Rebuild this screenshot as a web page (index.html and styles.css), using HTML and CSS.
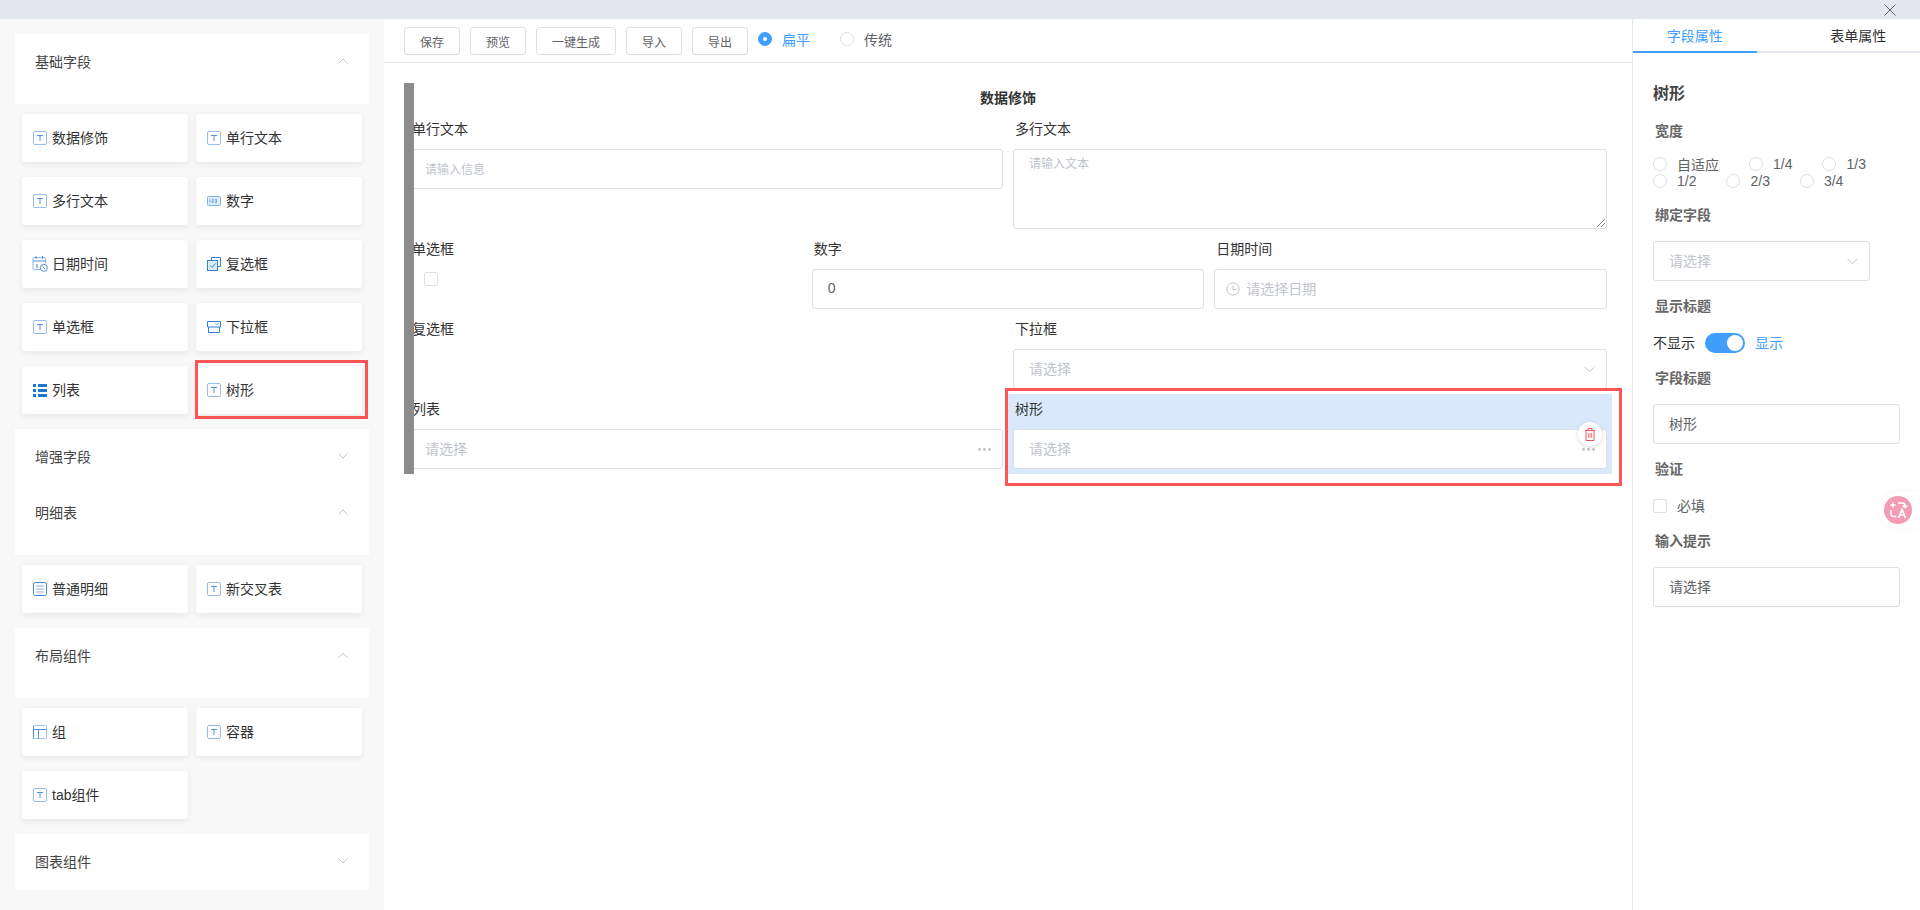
FILE: index.html
```html
<!DOCTYPE html>
<html lang="zh-CN">
<head>
    <meta charset="UTF-8">
    <title>表单设计器</title>
    <link rel="stylesheet" href="styles.css">
</head>
<body>
    <svg class="icon-defs" width="0" height="0">
        <symbol id="i-text" viewBox="0 0 14 14">
            <rect x="0.5" y="0.5" width="13" height="13" rx="1.5" fill="#fff" stroke="#92bdee"/>
            <path d="M4 4.5h6M7 4.5v5.5" fill="none" stroke="#4f94e0"/>
        </symbol>
        <symbol id="i-number" viewBox="0 0 14 10">
            <rect x="0.5" y="0.5" width="13" height="9" rx="1" fill="#dcebfa" stroke="#7fb0e6"/>
            <path d="M3 3.5v3M5 3.5h1.500v1.500h-1.500v1.500h1.500M8 3.500h1.500v3h-1.500M8 5h1.500" fill="none" stroke="#4f94e0" stroke-width="0.7"/>
        </symbol>
        <symbol id="i-date" viewBox="0 0 16 16">
            <path d="M9 13.500h-7a1 1 0 0 1-1-1v-10a1 1 0 0 1 1-1h10.500a1 1 0 0 1 1 1v5" fill="none" stroke="#8fb2e6"/>
            <path d="M1 5h12.500M4 0v3M10.500 0v3" fill="none" stroke="#4f94e0"/>
            <path d="M5 8v4" fill="none" stroke="#4a6fb0"/>
            <circle cx="11.800" cy="11.800" r="3.500" fill="#fff" stroke="#4f94e0"/>
            <path d="M10.500 10.500l2.500 2.500" fill="none" stroke="#4f94e0"/>
        </symbol>
        <symbol id="i-check" viewBox="0 0 14 14">
            <path d="M4.500 3.500v-3h9v9h-3" fill="none" stroke="#2f7fd6"/>
            <rect x="0.500" y="3.500" width="10" height="10" fill="#dcebfa" stroke="#2f7fd6"/>
            <path d="M3 8.500l2 2 3.500-4" fill="none" stroke="#2f7fd6"/>
        </symbol>
        <symbol id="i-select" viewBox="0 0 14 12">
            <path d="M0.500 0.500h13M0.500 0.500v5.500h13v-5.500M1.500 6v5.500h11v-5.500" fill="none" stroke="#2f7fd6"/>
            <path d="M8.500 2.200l1.500 1.500 1.500-1.500" fill="none" stroke="#4f94e0"/>
        </symbol>
        <symbol id="i-list" viewBox="0 0 14 13">
            <path d="M0 0h3v3h-3zM0 5h3v3h-3zM0 10h3v3h-3zM5 0h9v3h-9zM5 5h9v3h-9zM5 10h9v3h-9z" fill="#1976d2"/>
        </symbol>
        <symbol id="i-detail" viewBox="0 0 14 14">
            <rect x="0.500" y="0.500" width="13" height="13" rx="2" fill="#fff" stroke="#3b87db"/>
            <path d="M3 4h8M3 7h8M3 10h8" fill="none" stroke="#8fb2e6" stroke-width="1.200"/>
        </symbol>
        <symbol id="i-group" viewBox="0 0 14 14">
            <rect x="0.500" y="0.500" width="13" height="13" rx="1" fill="#fff" stroke="#9cc4ee"/>
            <path d="M0 4.500h14M5.500 4.500v9" fill="none" stroke="#4f94e0"/>
            <path d="M0.500 0.500v13" fill="none" stroke="#4f94e0"/>
        </symbol>
        <symbol id="i-up" viewBox="0 0 10 6">
            <path d="M0.500 5.500l4.500-4.500 4.500 4.500" fill="none" stroke="#c0c4cc"/>
        </symbol>
        <symbol id="i-down" viewBox="0 0 10 6">
            <path d="M0.500 0.500l4.500 4.500 4.500-4.500" fill="none" stroke="#c0c4cc"/>
        </symbol>
        <symbol id="i-drop" viewBox="0 0 11 7">
            <path d="M0.500 0.800l5 5 5-5" fill="none" stroke="#c0c4cc"/>
        </symbol>
        <symbol id="i-dots" viewBox="0 0 13 3">
            <circle cx="1.500" cy="1.500" r="1.400" fill="#c0c4cc"/>
            <circle cx="6.500" cy="1.500" r="1.400" fill="#c0c4cc"/>
            <circle cx="11.500" cy="1.500" r="1.400" fill="#c0c4cc"/>
        </symbol>
    </svg>

    <div class="topbar">
        <svg class="close-icon" width="12" height="12" viewBox="0 0 12 12"><path d="M0.500 0.500l11 11M11.500 0.500l-11 11" fill="none" stroke="#606266"/></svg>
    </div>

    <div class="workspace">
        <aside class="sidebar">
            <div class="group-head open"><span>基础字段</span><svg class="chev"><use href="#i-up"/></svg></div>
            <div class="cards">
                <div class="card"><span class="card-icon"><svg width="14" height="14"><use href="#i-text"/></svg></span>数据修饰</div>
                <div class="card"><span class="card-icon"><svg width="14" height="14"><use href="#i-text"/></svg></span>单行文本</div>
                <div class="card"><span class="card-icon"><svg width="14" height="14"><use href="#i-text"/></svg></span>多行文本</div>
                <div class="card"><span class="card-icon"><svg width="14" height="10"><use href="#i-number"/></svg></span>数字</div>
                <div class="card"><span class="card-icon"><svg width="16" height="16"><use href="#i-date"/></svg></span>日期时间</div>
                <div class="card"><span class="card-icon"><svg width="14" height="14"><use href="#i-check"/></svg></span>复选框</div>
                <div class="card"><span class="card-icon"><svg width="14" height="14"><use href="#i-text"/></svg></span>单选框</div>
                <div class="card"><span class="card-icon"><svg width="14" height="12"><use href="#i-select"/></svg></span>下拉框</div>
                <div class="card"><span class="card-icon"><svg width="14" height="13"><use href="#i-list"/></svg></span>列表</div>
                <div class="card"><span class="card-icon"><svg width="14" height="14"><use href="#i-text"/></svg></span>树形<i class="mark mark-card"></i></div>
            </div>
            <div class="group-head"><span>增强字段</span><svg class="chev"><use href="#i-down"/></svg></div>
            <div class="group-head open"><span>明细表</span><svg class="chev"><use href="#i-up"/></svg></div>
            <div class="cards">
                <div class="card"><span class="card-icon"><svg width="14" height="14"><use href="#i-detail"/></svg></span>普通明细</div>
                <div class="card"><span class="card-icon"><svg width="14" height="14"><use href="#i-text"/></svg></span>新交叉表</div>
            </div>
            <div class="group-head open"><span>布局组件</span><svg class="chev"><use href="#i-up"/></svg></div>
            <div class="cards">
                <div class="card"><span class="card-icon"><svg width="14" height="14"><use href="#i-group"/></svg></span>组</div>
                <div class="card"><span class="card-icon"><svg width="14" height="14"><use href="#i-text"/></svg></span>容器</div>
                <div class="card"><span class="card-icon"><svg width="14" height="14"><use href="#i-text"/></svg></span>tab组件</div>
            </div>
            <div class="group-head"><span>图表组件</span><svg class="chev"><use href="#i-down"/></svg></div>
        </aside>

        <main class="main">
            <div class="toolbar">
                <button class="btn">保存</button>
                <button class="btn">预览</button>
                <button class="btn">一键生成</button>
                <button class="btn">导入</button>
                <button class="btn">导出</button>
                <label class="radio radio-on"><i class="dot"></i>扁平</label>
                <label class="radio"><i class="dot"></i>传统</label>
            </div>

            <div class="canvas">
                <div class="form">
                    <div class="form-bar"></div>
                    <div class="form-title">数据修饰</div>
                    <div class="row">
                        <div class="field">
                            <div class="field-label">单行文本</div>
                            <div class="input small">请输入信息</div>
                        </div>
                        <div class="field">
                            <div class="field-label">多行文本</div>
                            <div class="input textarea small">请输入文本
                                <svg class="grip" width="8" height="8" viewBox="0 0 8 8"><path d="M0 8l8-8M4 8l4-4" fill="none" stroke="#606266" stroke-width="0.800"/></svg>
                            </div>
                        </div>
                    </div>
                    <div class="row row-3">
                        <div class="field">
                            <div class="field-label">单选框</div>
                            <div class="check-holder"><i class="check"></i></div>
                        </div>
                        <div class="field">
                            <div class="field-label">数字</div>
                            <div class="input filled">0</div>
                        </div>
                        <div class="field">
                            <div class="field-label">日期时间</div>
                            <div class="input date">
                                <svg width="14" height="14" viewBox="0 0 14 14"><circle cx="7" cy="7" r="6.200" fill="none" stroke="#c0c4cc"/><path d="M7 3.500v4h3.500" fill="none" stroke="#c0c4cc"/></svg>
                                请选择日期
                            </div>
                        </div>
                    </div>
                    <div class="row">
                        <div class="field">
                            <div class="field-label">复选框</div>
                        </div>
                        <div class="field">
                            <div class="field-label">下拉框</div>
                            <div class="input between">请选择<svg width="11" height="7"><use href="#i-drop"/></svg></div>
                        </div>
                    </div>
                    <div class="row">
                        <div class="field">
                            <div class="field-label">列表</div>
                            <div class="input between">请选择<svg width="13" height="3"><use href="#i-dots"/></svg></div>
                        </div>
                        <div class="field selected">
                            <div class="field-label">树形</div>
                            <div class="input between">请选择<svg width="13" height="3"><use href="#i-dots"/></svg></div>
                            <div class="delete-btn">
                                <svg width="10" height="13" viewBox="0 0 10 13"><path d="M0 2.500h10M3 2.500v-2h4v2M1 2.500v10h8v-10M3.800 5v5M6.200 5v5" fill="none" stroke="#f4505c"/></svg>
                            </div>
                            <i class="mark mark-field"></i>
                        </div>
                    </div>
                </div>
            </div>
        </main>

        <aside class="props">
            <div class="tabs">
                <div class="tab active">字段属性</div>
                <div class="tab tab-second">表单属性</div>
            </div>
            <div class="props-body">
                <div class="props-title">树形</div>
                <div class="prop-label">宽度</div>
                <div class="radio-group">
                    <label class="radio"><i class="dot"></i>自适应</label>
                    <label class="radio"><i class="dot"></i>1/4</label>
                    <label class="radio"><i class="dot"></i>1/3</label>
                    <label class="radio"><i class="dot"></i>1/2</label>
                    <label class="radio"><i class="dot"></i>2/3</label>
                    <label class="radio"><i class="dot"></i>3/4</label>
                </div>
                <div class="prop-label">绑定字段</div>
                <div class="input between select-short">请选择<svg width="11" height="7"><use href="#i-drop"/></svg></div>
                <div class="prop-label">显示标题</div>
                <div class="switch-row">
                    <span class="nudge">不显示</span>
                    <span class="switch"><i></i></span>
                    <span class="nudge switch-on">显示</span>
                </div>
                <div class="prop-label">字段标题</div>
                <div class="input filled">树形</div>
                <div class="prop-label">验证</div>
                <div class="check-row"><i class="check"></i><span class="nudge">必填</span></div>
                <div class="prop-label">输入提示</div>
                <div class="input filled">请选择</div>
            </div>
            <div class="translate">
                <span class="translate-ball">
                    <svg width="20" height="20" viewBox="0 0 20 20">
                        <path d="M5 1.500l1 2.500 2.500 1-2.500 1-1 2.500-1-2.500-2.500-1 2.500-1z" fill="#fff"/>
                        <path d="M10 3h4.500a2.500 2.500 0 0 1 2.500 2.500v2M15 5.500l2 2 2-2" fill="none" stroke="#fff" stroke-width="1.600"/>
                        <path d="M3 10v4a2.500 2.500 0 0 0 2.500 2.500h3" fill="none" stroke="#fff" stroke-width="1.600"/>
                        <path d="M10.500 18l3.500-8.500 3.500 8.500M12 15h4" fill="none" stroke="#fff" stroke-width="1.700"/>
                    </svg>
                </span>
            </div>
        </aside>
    </div>
</body>
</html>
```

FILE: styles.css
```css
* {
    box-sizing: border-box;
}

body {
    margin: 0;
    height: 910px;
    overflow: hidden;
    background: #fff;
    color: #303133;
    font-family: "Liberation Sans", "Noto Sans CJK SC", sans-serif;
    font-size: 14px;
}

i {
    font-style: normal;
}

.icon-defs {
    position: absolute;
}

.nudge {
    padding-bottom: 2px;
}

.topbar {
    height: 19px;
    background: #e4e7ef;
    display: flex;
    justify-content: flex-end;
    align-items: center;
    padding-right: 24px;
}

.workspace {
    display: flex;
    height: 891px;
}

/* left field list */
.sidebar {
    width: 384px;
    flex: none;
    background: #f8f8f8;
    padding: 15px 15px 0;
}

.group-head {
    height: 56px;
    background: #fff;
    padding: 0 20px 2px;
    display: flex;
    justify-content: space-between;
    align-items: center;
    color: #444;
}

.group-head.open {
    height: 70px;
    padding-bottom: 16px;
}

.chev {
    width: 10px;
    height: 6px;
    margin-right: 1px;
}

.cards {
    display: grid;
    grid-template-columns: 166px 166px;
    gap: 15px 8px;
    margin: 10px 7px 15px;
}

.card {
    position: relative;
    height: 48px;
    background: #fff;
    border-radius: 3px;
    box-shadow: 0 2px 6px rgba(0, 0, 0, 0.08);
    display: flex;
    align-items: center;
    padding: 0 0 2px 10px;
    color: #333;
}

.card-icon {
    width: 16px;
    margin: 2px 4px 0 0;
    display: flex;
    justify-content: center;
    align-items: center;
}

.mark {
    position: absolute;
    border: 3px solid #fd5555;
    pointer-events: none;
    z-index: 3;
}

.mark-card {
    top: -6px;
    left: -1px;
    right: -6px;
    bottom: -5px;
}

.mark-field {
    top: -6px;
    left: -3px;
    right: -10px;
    bottom: -12px;
}

/* middle canvas */
.main {
    flex: 1;
    min-width: 0;
}

.toolbar {
    height: 44px;
    border-bottom: 1px solid #e4e7ed;
    padding: 8px 20px 0;
    display: flex;
    align-items: flex-start;
}

.btn {
    height: 28px;
    padding: 0 15px;
    margin-right: 10px;
    background: #fff;
    border: 1px solid #dcdfe6;
    border-radius: 3px;
    color: #606266;
    font-family: inherit;
    font-size: 12px;
}

.radio {
    display: inline-flex;
    align-items: center;
    color: #606266;
    margin-right: 30px;
}

.toolbar .radio {
    height: 24px;
}

.radio .dot {
    width: 14px;
    height: 14px;
    border: 1px solid #dcdfe6;
    border-radius: 50%;
    margin-right: 10px;
    background: #fff;
    flex: none;
}

.radio-on {
    color: #409eff;
}

.radio-on .dot {
    background: #409eff;
    border-color: #409eff;
    position: relative;
}

.radio-on .dot::after {
    content: "";
    position: absolute;
    left: 4px;
    top: 4px;
    width: 4px;
    height: 4px;
    background: #fff;
    border-radius: 50%;
}

.canvas {
    padding: 20px 20px 0;
}

.form {
    position: relative;
}

.form-bar {
    position: absolute;
    left: 0;
    top: 0;
    bottom: 0;
    width: 10px;
    background: #8c8c8c;
    z-index: 2;
}

.form-title {
    padding-top: 5px;
    height: 26px;
    line-height: 21px;
    text-align: center;
    font-weight: bold;
}

.row {
    display: grid;
    grid-template-columns: 1fr 1fr;
}

.row-3 {
    grid-template-columns: 1fr 1fr 1fr;
}

.field {
    position: relative;
    padding: 0 5px;
    min-height: 80px;
}

.field-label {
    height: 40px;
    line-height: 40px;
    padding-left: 2px;
    color: #333;
}

.field:first-child .field-label {
    padding-left: 3px;
}

.input {
    height: 40px;
    border: 1px solid #dcdfe6;
    border-radius: 3px;
    padding: 0 15px 2px;
    background: #fff;
    color: #c0c4cc;
    display: flex;
    align-items: center;
}

.input svg {
    margin-top: 2px;
}

.input.small {
    font-size: 12px;
}

.input.filled {
    color: #606266;
}

.textarea {
    position: relative;
    height: 80px;
    align-items: flex-start;
    padding-top: 4px;
}

.grip {
    position: absolute;
    right: 1px;
    bottom: 1px;
}

.date {
    padding-left: 11px;
    gap: 6px;
}

.between {
    justify-content: space-between;
    padding-right: 11px;
}

.check-holder {
    padding: 3px 0 0 15px;
}

.check {
    display: inline-block;
    width: 14px;
    height: 14px;
    border: 1px solid #dcdfe6;
    border-radius: 2px;
    background: #fff;
}

.field.selected {
    margin-top: 5px;
    padding-bottom: 5px;
    min-height: 0;
    background: #d9e9fb;
}

.selected .field-label {
    height: 30px;
    line-height: 30px;
    margin-bottom: 5px;
}

.delete-btn {
    position: absolute;
    top: 28px;
    right: 10px;
    width: 24px;
    height: 24px;
    border-radius: 50%;
    background: #fff;
    box-shadow: 0 1px 5px rgba(0, 0, 0, 0.15);
    display: flex;
    justify-content: center;
    align-items: center;
}

/* right property panel */
.props {
    position: relative;
    width: 288px;
    flex: none;
    border-left: 1px solid #e4e7ed;
}

.tabs {
    display: flex;
    height: 34px;
    border-bottom: 2px solid #e4e7ed;
}

.tab {
    width: 124px;
    height: 34px;
    padding-top: 3px;
    line-height: 29px;
    text-align: center;
    color: #303133;
}

.tab.active {
    color: #409eff;
    border-bottom: 2px solid #409eff;
}

.tab-second {
    margin-left: 40px;
}

.props-body {
    padding: 29px 20px 0;
}

.props-title {
    height: 24px;
    line-height: 24px;
    font-size: 16px;
    font-weight: bold;
    color: #444;
}

.prop-label {
    height: 51px;
    line-height: 51px;
    padding-left: 2px;
    color: #666;
    font-weight: bold;
}

.radio-group {
    display: flex;
    flex-wrap: wrap;
    height: 33px;
    margin-top: -1px;
    margin-bottom: 1px;
}

.radio-group .radio {
    height: 16.500px;
}

.select-short {
    width: 217px;
}

.switch-row {
    height: 21px;
    display: flex;
    align-items: center;
    gap: 10px;
}

.switch {
    width: 40px;
    height: 20px;
    border-radius: 10px;
    background: #409eff;
    position: relative;
}

.switch i {
    position: absolute;
    top: 2px;
    right: 2px;
    width: 16px;
    height: 16px;
    border-radius: 50%;
    background: #fff;
}

.switch-on {
    color: #409eff;
}

.check-row {
    height: 21px;
    display: flex;
    align-items: center;
    gap: 10px;
    color: #606266;
}

.translate {
    position: absolute;
    top: 473px;
    right: 0;
    width: 41px;
    height: 36px;
    background: #fff;
    border-radius: 18px 0 0 18px;
    box-shadow: 0 0 6px rgba(0, 0, 0, 0.04);
    padding: 4px 0 0 5px;
}

.translate-ball {
    width: 28px;
    height: 28px;
    border-radius: 50%;
    background: #f39cb4;
    display: flex;
    justify-content: center;
    align-items: center;
}
```
